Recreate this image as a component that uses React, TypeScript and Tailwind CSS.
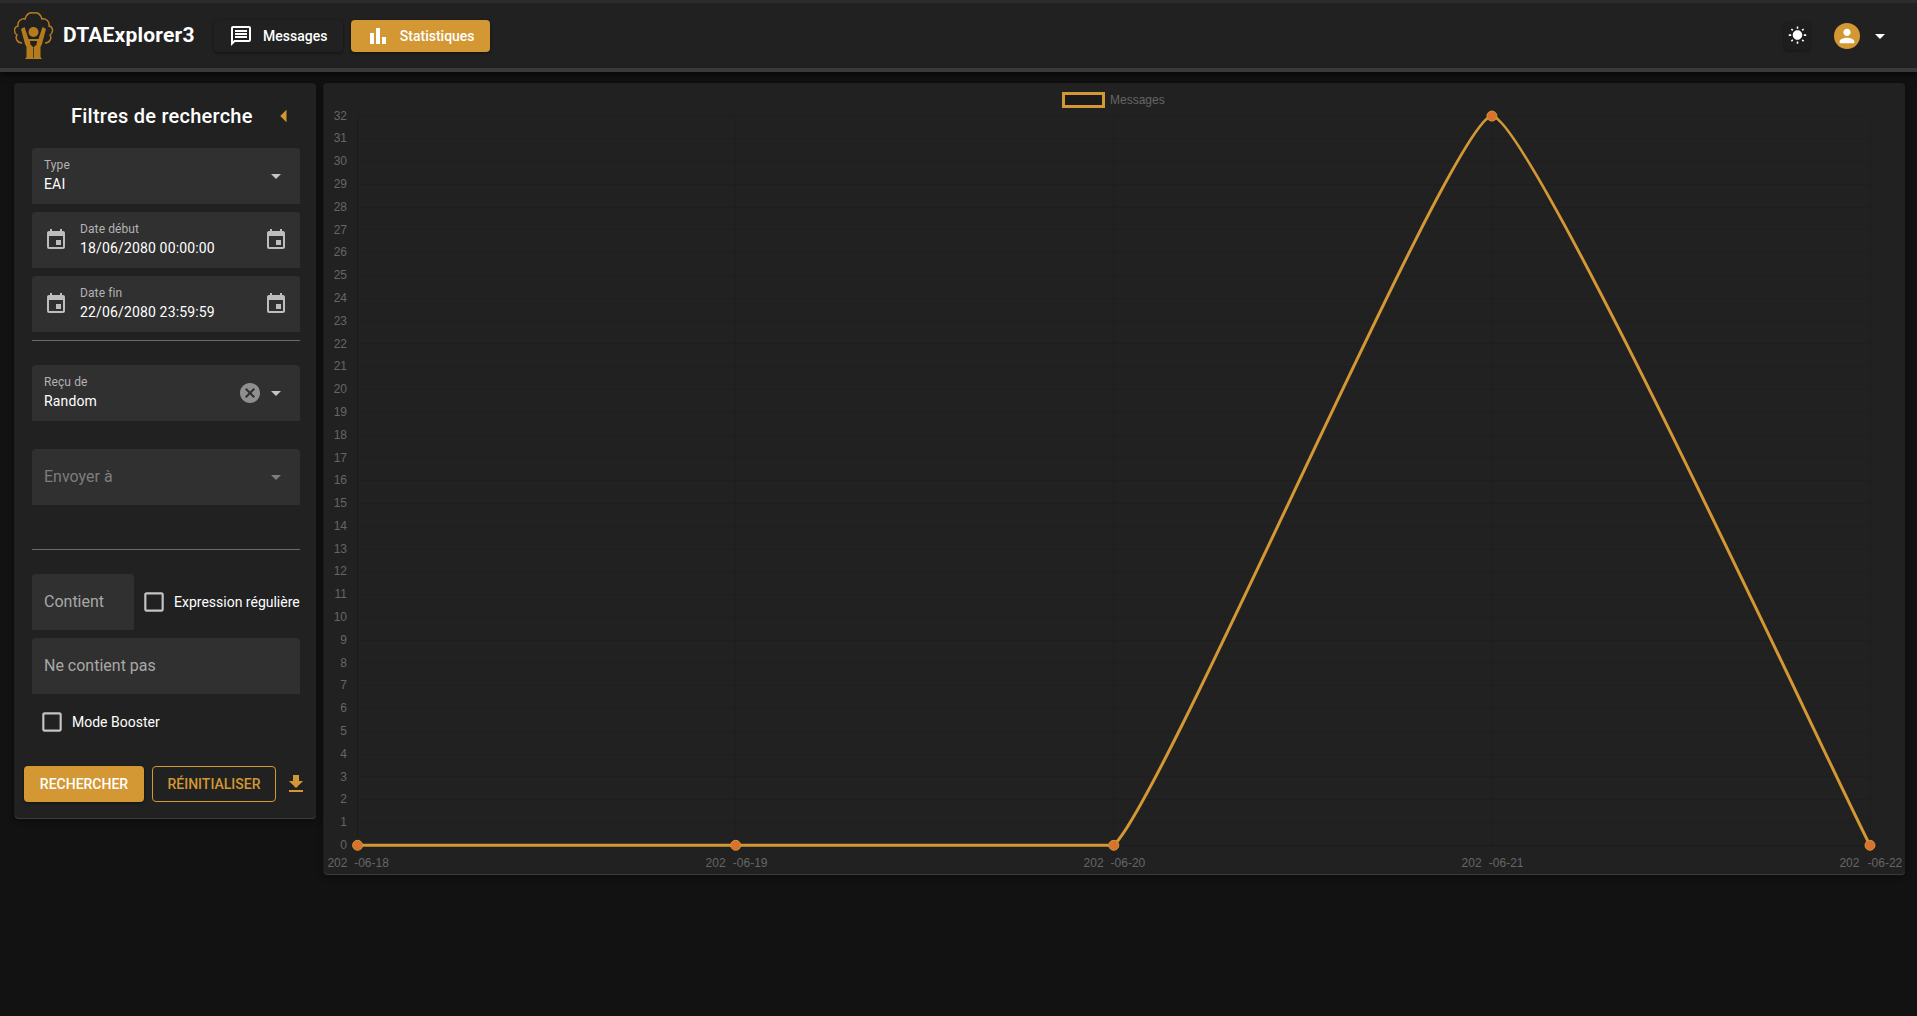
import type { ReactNode } from "react"
import {
  MdArrowDropDown,
  MdArrowLeft,
  MdBarChart,
  MdCancel,
  MdCheckBoxOutlineBlank,
  MdEvent,
  MdFileDownload,
  MdOutlineMessage,
  MdPerson,
  MdWbSunny,
} from "react-icons/md"

const yTicks = Array.from({ length: 33 }, (_, i) => i)
const xTicks = [
  { x: 357.6, label: "-06-18", a: 327.4, b: 354.2 },
  { x: 735.7, label: "-06-19", a: 705.6, b: 732.8 },
  { x: 1113.8, label: "-06-20", a: 1083.6, b: 1110.6 },
  { x: 1491.9, label: "-06-21", a: 1461.6, b: 1488.8 },
  { x: 1870, label: "-06-22", a: 1839.4, b: 1867.6 },
]
const yOf = (v: number) => 845.3 - v * 22.79

function Logo() {
  return (
    <svg width="40" height="50" viewBox="0 0 40 50" className="shrink-0">
      <path
        d="M8 32 C3 32 1 27 3 24 C-1 21 0 16 4 15 C3 10 8 7 11 8 C12 3 16 1 19.5 2 C23 1 27 3 28 8 C31 7 36 10 35 15 C39 16 40 21 36 24 C38 27 36 32 31 32"
        fill="none"
        stroke="#b47c1c"
        strokeWidth="1.5"
      />
      <circle cx="19.5" cy="21" r="5" fill="#b47c1c" />
      <path
        d="M7 18 L10.5 16 L14.5 28 L24.5 28 L28.5 16 L32 18 L28 33 L26.5 36 L26.5 46 L28 48 L11 48 L12.5 46 L12.5 36 L11 33 Z"
        fill="#b47c1c"
      />
      <path d="M16 30 L23 30 L22.5 33.5 L19.5 36.5 L16.5 33.5 Z" fill="#212121" />
      <path d="M19.5 36.5 L19.5 47" stroke="#212121" strokeWidth="0.7" />
    </svg>
  )
}

function Field({ className = "", children }: { className?: string; children: ReactNode }) {
  return (
    <div className={`flex h-14 shrink-0 items-center rounded-t bg-[#303030] ${className}`}>{children}</div>
  )
}

function Labeled({ label, value }: { label: string; value: string }) {
  return (
    <div className="flex flex-col">
      <span className="text-xs leading-[14px] tracking-[0.1px] text-[#b3b3b3]">{label}</span>
      <span className="mt-[2px] text-sm leading-5 tracking-[0.15px] text-white">{value}</span>
    </div>
  )
}

function DateField({ label, value }: { label: string; value: string }) {
  return (
    <Field className="px-3">
      <MdEvent size={24} className="text-[#bdbdbd]" />
      <div className="ml-3 flex-1">
        <Labeled label={label} value={value} />
      </div>
      <MdEvent size={24} className="text-[#bdbdbd]" />
    </Field>
  )
}

function Divider() {
  return <div className="h-px bg-[#6a6a6a]" />
}

function Chart() {
  return (
    <svg viewBox="324 83 1581 791" className="block h-full w-full" fontFamily="'Liberation Sans', Arial, sans-serif" fontSize="12">
      {yTicks.map((v) => (
        <line key={v} x1="357.6" x2="1870" y1={Math.floor(yOf(v)) + 0.5} y2={Math.floor(yOf(v)) + 0.5} stroke="#1b1b1b" strokeWidth="1" opacity={v === 0 ? 0.9 : 0.4} />
      ))}
      {xTicks.map((t, i) => (
        <line key={t.x} x1={Math.floor(t.x) + 0.5} x2={Math.floor(t.x) + 0.5} y1="116" y2="845" stroke="#1b1b1b" strokeWidth="1" opacity={i === 0 ? 0.9 : 0.4} />
      ))}
      {yTicks.map((v) => (
        <text key={v} x="347" y={yOf(v) + 0.5} textAnchor="end" dominantBaseline="middle" fill="#666666">
          {v}
        </text>
      ))}
      {xTicks.map((t) => (
        <g key={t.label} fill="#666666">
          <text x={t.a} y="867">202</text>
          <text x={t.b} y="867">{t.label}</text>
        </g>
      ))}
      <rect x="1063.5" y="93.5" width="40" height="13" fill="#1b1b1b" stroke="#d39733" strokeWidth="3" />
      <text x="1110" y="103.5" fill="#666666">Messages</text>
      <path
        d="M357.6 845.3 L1113.8 845.3 C1165.6 795.3 1454.1 116.1 1491.9 116.1 C1529.7 116.1 1832.2 772.4 1870 845.3"
        fill="none"
        stroke="#d39733"
        strokeWidth="3"
      />
      {xTicks.map((t, i) => (
        <circle key={t.x} cx={t.x} cy={i === 3 ? 116.1 : 845.3} r="5" fill="#d9722e" stroke="#d39733" strokeWidth="1" />
      ))}
    </svg>
  )
}

const cardShadow = "shadow-[0_1px_1px_rgba(255,255,255,0.22),-1px_0_1px_rgba(255,255,255,0.06),0_2px_6px_rgba(0,0,0,0.6)]"

export default function App() {
  return (
    <div className="flex min-h-[1016px] flex-col bg-[#121212] font-['Roboto',sans-serif] text-white">
      <header className="flex h-[72px] shrink-0 items-center border-t-[3px] border-b-[4px] border-t-[#2c2c2c] border-b-[#3a3a3a] bg-[#212121] pr-[28px] pl-[14px] shadow-[0_3px_6px_rgba(0,0,0,0.6)]">
        <Logo />
        <span className="ml-[9px] text-[21px] leading-none font-bold tracking-[0.2px]">DTAExplorer3</span>
        <button className="ml-[19px] flex h-8 w-[129px] items-center justify-center gap-[10px] rounded bg-[#212121] text-sm font-medium shadow-[0_1px_3px_rgba(0,0,0,0.5)]">
          <MdOutlineMessage size={24} />
          Messages
        </button>
        <button className="ml-2 flex h-8 w-[139px] items-center justify-center gap-[10px] rounded bg-[#d39733] text-sm font-medium shadow-[0_1px_3px_rgba(0,0,0,0.5)]">
          <MdBarChart size={24} />
          Statistiques
        </button>
        <div className="ml-auto flex items-center">
          <div className="flex h-7 w-[26px] items-center justify-center rounded bg-[#1e1e1e] shadow-[0_1px_3px_rgba(0,0,0,0.4)]">
            <MdWbSunny size={19} />
          </div>
          <div className="ml-6 flex h-[26px] w-[26px] items-center justify-center rounded-full bg-[#d39733]">
            <MdPerson size={22} />
          </div>
          <MdArrowDropDown size={24} className="ml-[8px] -mr-[3px]" />
        </div>
      </header>

      <main className="flex items-start gap-2 px-[15px] pt-[11px]">
        <aside className={`flex h-[735px] w-[301px] shrink-0 flex-col rounded bg-[#212121] pr-4 pl-[17px] ${cardShadow}`}>
          <div className="flex h-[65px] shrink-0 items-center pl-[39px]">
            <h2 className="text-xl font-medium tracking-[0.25px] whitespace-nowrap">Filtres de recherche</h2>
            <MdArrowLeft size={30} className="ml-[16px] shrink-0 text-[#d39733]" />
          </div>

          <Field className="px-3">
            <div className="flex-1">
              <Labeled label="Type" value="EAI" />
            </div>
            <MdArrowDropDown size={24} className="text-[#c4c4c4]" />
          </Field>
          <div className="mt-2 flex flex-col gap-2">
            <DateField label="Date début" value="18/06/2080 00:00:00" />
            <DateField label="Date fin" value="22/06/2080 23:59:59" />
          </div>
          <div className="mt-2">
            <Divider />
          </div>

          <Field className="mt-6 px-3">
            <div className="flex-1">
              <Labeled label="Reçu de" value="Random" />
            </div>
            <MdCancel size={24} className="text-[#8f8f8f]" />
            <MdArrowDropDown size={24} className="ml-[2px] text-[#c4c4c4]" />
          </Field>
          <Field className="mt-7 px-3">
            <span className="flex-1 text-base text-[#7d7d7d]">Envoyer à</span>
            <MdArrowDropDown size={24} className="text-[#7d7d7d]" />
          </Field>
          <div className="mt-11">
            <Divider />
          </div>

          <div className="mt-6 flex items-center">
            <Field className="w-[102px] pl-3">
              <span className="text-base text-[#a8a8a8]">Contient</span>
            </Field>
            <MdCheckBoxOutlineBlank size={26} className="ml-[7px] shrink-0 text-[#c4c4c4]" />
            <span className="ml-[7px] text-sm whitespace-nowrap">Expression régulière</span>
          </div>
          <Field className="mt-2 pl-3">
            <span className="text-base text-[#a8a8a8]">Ne contient pas</span>
          </Field>
          <div className="mt-[15px] flex items-center pl-[7px]">
            <MdCheckBoxOutlineBlank size={26} className="shrink-0 text-[#c4c4c4]" />
            <span className="ml-[7px] text-sm">Mode Booster</span>
          </div>

          <div className="mt-[31px] -ml-2 flex items-center">
            <button className="h-9 w-[120px] shrink-0 rounded bg-[#d39733] text-sm font-medium shadow-[0_1px_3px_rgba(0,0,0,0.5)]">
              RECHERCHER
            </button>
            <button className="ml-2 h-9 w-[124px] shrink-0 rounded border border-[#d39733] text-sm font-medium text-[#d39733]">
              RÉINITIALISER
            </button>
            <MdFileDownload size={24} className="ml-2 shrink-0 text-[#d39733]" />
          </div>
        </aside>

        <section className={`h-[791px] w-[1581px] shrink-0 rounded bg-[#212121] ${cardShadow}`}>
          <Chart />
        </section>
      </main>
    </div>
  )
}
